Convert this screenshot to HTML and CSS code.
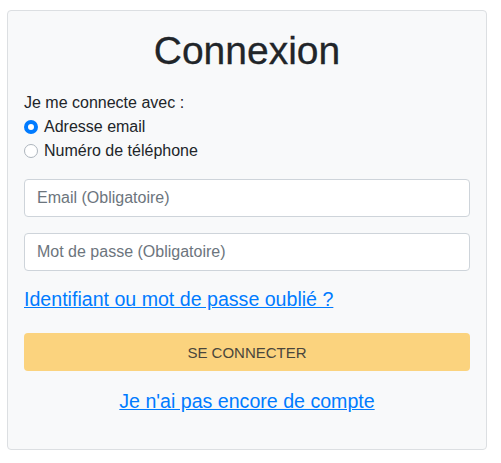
FILE: index.html
```html
<!DOCTYPE html>
<html lang="fr">
<head>
<meta charset="utf-8">
<title>Connexion</title>
<link rel="stylesheet" href="styles.css">
</head>
<body>
<div class="card">
  <h1 class="title">Connexion</h1>
  <div class="choice">
    <div class="choice-label">Je me connecte avec :</div>
    <label class="radio"><input type="radio" name="mode" checked><span>Adresse email</span></label>
    <label class="radio"><input type="radio" name="mode"><span>Numéro de téléphone</span></label>
  </div>
  <input class="field" type="text" placeholder="Email (Obligatoire)">
  <input class="field" type="password" placeholder="Mot de passe (Obligatoire)">
  <a class="link forgot" href="#">Identifiant ou mot de passe oublié ?</a>
  <button class="submit" type="button">Se connecter</button>
  <div class="signup"><a class="link" href="#">Je n'ai pas encore de compte</a></div>
</div>
</body>
</html>
```

FILE: styles.css
```css
* { box-sizing: border-box; }
html, body { background: #ffffff; }
body {
  margin: 0;
  padding: 10px 14px 0 7px;
  font-family: "Liberation Sans", Arial, Helvetica, sans-serif;
  font-size: 16px;
  line-height: 24px;
  color: #212529;
}
.card {
  width: 480px;
  height: 440px;
  background: #f8f9fa;
  border: 1px solid #dcdfe2;
  border-radius: 4px;
  padding: 16px;
  display: flex;
  flex-direction: column;
}
.title {
  margin: 0 0 16px;
  text-align: center;
  font-size: 39px;
  line-height: 48px;
  font-weight: 500;
  color: #212529;
  -webkit-text-stroke: 0.3px #212529;
}
.choice { display: flex; flex-direction: column; margin-bottom: 16px; }
.radio { display: flex; align-items: center; height: 24px; cursor: pointer; }
.radio input {
  appearance: none;
  -webkit-appearance: none;
  margin: 0 6px 0 0;
  width: 14px;
  height: 14px;
  border-radius: 50%;
  border: 1px solid #adb5bd;
  background: #ffffff;
}
.radio input:checked {
  border: 4px solid #007bff;
  background: #ffffff;
}
.field {
  display: block;
  width: 100%;
  height: 38px;
  padding: 6px 12px;
  font-family: inherit;
  font-size: 16px;
  color: #495057;
  background: #ffffff;
  border: 1px solid #ced4da;
  border-radius: 4px;
  margin-bottom: 16px;
}
.field::placeholder { color: #6c757d; opacity: 1; }
.link {
  color: #007bff;
  text-decoration: underline;
  font-size: 19.6px;
  line-height: 24px;
}
.forgot { align-self: flex-start; margin-bottom: 22px; }
.submit {
  width: 100%;
  height: 38px;
  border: none;
  border-radius: 4px;
  background: #fbd37e;
  color: #4a463c;
  font-family: inherit;
  font-size: 15px;
  text-transform: uppercase;
  margin-bottom: 18px;
}
.signup { text-align: center; line-height: 24px; }
```
